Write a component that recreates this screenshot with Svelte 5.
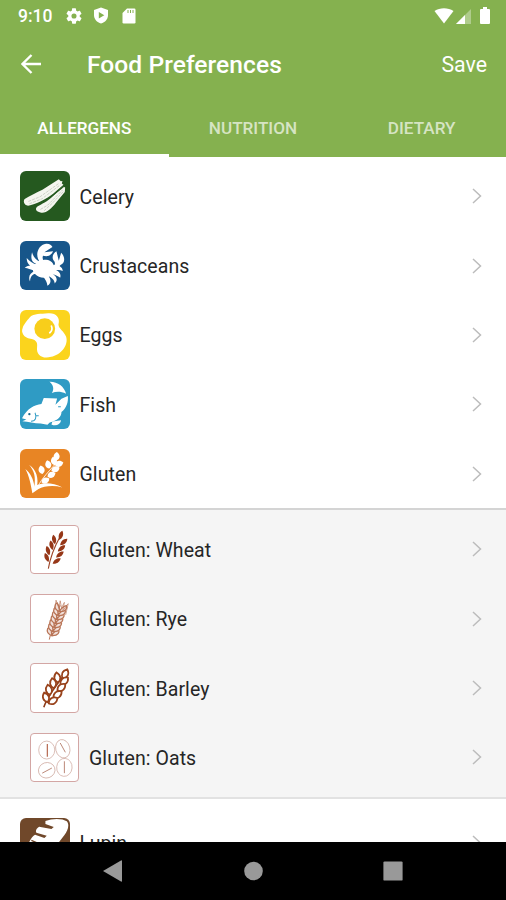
<script>
  const tabs = ['Allergens', 'Nutrition', 'Dietary']

  const allergens = [
    { id: 'celery', name: 'Celery', color: '#25591f' },
    { id: 'crustaceans', name: 'Crustaceans', color: '#17568a' },
    { id: 'eggs', name: 'Eggs', color: '#fbd41d' },
    { id: 'fish', name: 'Fish', color: '#2f9bc4' },
    { id: 'gluten', name: 'Gluten', color: '#e88524' }
  ]

  const glutenTypes = [
    { id: 'wheat', name: 'Gluten: Wheat' },
    { id: 'rye', name: 'Gluten: Rye' },
    { id: 'barley', name: 'Gluten: Barley' },
    { id: 'oats', name: 'Gluten: Oats' }
  ]

  const more = [{ id: 'lupin', name: 'Lupin', color: '#70482a' }]

  // x, y, rotation of each grain on the ear
  const glutenGrains = [
    [109, 22, 5], [101, 36, -12], [84, 46, -12], [64, 62, -10],
    [117, 44, 75], [106, 60, 72], [94, 77, 68], [76, 94, 65]
  ]
  const wheatGrains = [
    [93, 29, 18], [72, 42, -10], [64, 60, -12], [53, 77, -16], [49, 98, -22],
    [102, 50, 48], [95, 70, 50], [90, 89, 52], [80, 109, 56]
  ]
  const ryeGrains = [0, 1, 2, 3, 4, 5, 6]
  const barleyGrains = [
    [106, 32, 24], [82, 43, -8], [69, 61, -10], [56, 81, -14], [47, 105, -20],
    [103, 54, 46], [94, 74, 48], [82, 96, 52], [68, 115, 58]
  ]

  let activeTab = $state('Allergens')
</script>

{#snippet picture(id)}
  <svg viewBox="0 0 148 148">
    {#if id === 'celery'}
      <g fill="#f5f6ef">
        <path d="M14 84C28 75 48 65 67 56L116 25L122 31L127 30L125 37L130 41L99 68C78 84 48 100 24 104C11 102 9 90 14 84Z" />
        <path d="M51 107C65 98 83 91 97 76L129 46L135 49L134 63L108 94C93 114 77 128 61 124C49 122 44 114 51 107Z" />
      </g>
      <path d="M25 91L60 77L115 38M28 98L66 83L121 41M61 115L83 102L127 57M72 119L97 96L130 61" fill="none" stroke="#b9c0b3" stroke-width="2" stroke-dasharray="9 3" />
      <path d="M45 104L91 79L135 43" fill="none" stroke="#25591f" stroke-width="3" />
    {:else if id === 'crustaceans'}
      <path d="M43 73C50 59 65 53 84 57C103 62 108 85 96 100C82 115 56 112 45 99C37 91 37 83 43 73Z" fill="#fff" />
      <path d="M61 65C43 45 52 12 78 8C88 7 94 12 97 18L73 34L99 31C91 48 78 46 69 44C66 50 68 56 72 62ZM90 71C103 76 107 70 103 61C95 53 95 40 109 31L116 59L123 35C135 47 136 66 121 72C113 84 102 86 94 82Z" fill="#fff" />
      <path d="M51 68C35 65 31 53 36 34C40 48 47 56 59 62ZM45 79C28 77 20 66 20 51C29 61 37 67 50 71ZM43 89C31 84 24 82 14 80C27 71 38 72 48 80ZM47 98C36 100 31 107 30 121C23 106 31 95 44 90ZM70 107C76 117 81 122 82 134C96 126 92 112 83 102ZM86 104C95 112 102 114 104 127C117 114 105 102 93 96ZM93 95C105 104 113 103 120 110C125 96 112 86 98 83ZM98 84C110 89 119 85 128 90C126 73 112 72 98 74Z" fill="#fff" />
    {:else if id === 'eggs'}
      <path d="M30 21C42 11 61 12 84 10C107 8 121 23 115 43C115 56 132 63 138 80C146 106 121 135 93 140C66 147 48 134 51 111C54 93 43 88 31 86C12 84 2 67 8 54C10 45 21 32 30 21Z" fill="#fff" />
      <circle cx="74" cy="56" r="31" fill="#f8ce1b" />
      <path d="M94 48C97 55 95 63 89 68" fill="none" stroke="#fff" stroke-width="5" stroke-linecap="round" />
    {:else if id === 'fish'}
      <path d="M6 117C22 88 43 78 64 75L71 57L111 58L106 77L124 59L143 51C145 69 139 87 124 99C124 113 111 126 89 130L82 137L62 133C42 132 25 128 7 126L19 121Z" fill="#fff" />
      <path d="M88 8C112 7 132 22 138 44C121 37 109 37 95 42C104 28 98 16 88 8ZM97 127L123 123C120 137 107 142 94 136Z" fill="#fff" />
      <path d="M33 126C48 126 50 114 45 101M48 110H56M114 83L122 83" stroke="#2f9bc4" stroke-width="3" fill="none" />
      <circle cx="28" cy="105" r="3.5" fill="#17678f" />
    {:else if id === 'gluten'}
      <g fill="#fff">
        {#each glutenGrains as [x, y, r]}
          <path d="M0-13C12-6 13 6 1 13C-11 8-12-5 0-13Z" transform="translate({x} {y}) rotate({r})" />
        {/each}
        <path d="M43 113C60 100 94 98 127 115C101 108 73 110 54 120L37 132C32 106 28 81 16 60C32 73 40 91 43 111ZM43 112C47 83 43 66 27 47C49 62 57 86 50 119Z" />
      </g>
      <path d="M50 121C59 96 74 80 112 38" fill="none" stroke="#fff" stroke-width="2.5" />
    {:else if id === 'wheat'}
      <path d="M54 133C60 98 70 70 90 34" fill="none" stroke="#9d4527" stroke-width="3.5" />
      <g fill="#963718">
        {#each wheatGrains as [x, y, r]}
          <path d="M0-15C9-6 8 6 0 15C-8 6-9-6 0-15Z" transform="translate({x} {y}) rotate({r})" />
        {/each}
      </g>
    {:else if id === 'rye'}
      <g fill="none" stroke="#b97557">
        <path d="M57 139L61 122L91 32" stroke-width="3" />
        <g stroke-width="4">
          {#each ryeGrains as i}
            <g transform="translate({67 + i * 4} {119 - i * 12.5}) rotate(17)">
              <path d="M0 8C-22 5-21-9-15-16C-8-11-3-4 0 8ZM0 8C21 3 20-10 15-16C7-11 2-4 0 8Z" fill="#f1dfd9" />
            </g>
          {/each}
        </g>
        <path d="M74 46L78 16L87 42L91 18L95 40L104 23L99 49L116 27L108 62" stroke-width="2" />
      </g>
    {:else if id === 'barley'}
      <path d="M40 135C48 107 72 74 100 38" fill="none" stroke="#8d3b19" stroke-width="5" />
      <g fill="#fff" stroke="#99431c" stroke-width="5.5">
        {#each barleyGrains as [x, y, r]}
          <path d="M0-17C13-7 12 7 0 15C-12 7-13-7 0-17Z" transform="translate({x} {y}) rotate({r})" />
        {/each}
      </g>
    {:else if id === 'oats'}
      <g fill="none" stroke="#cda69c" stroke-width="2.2">
        <ellipse cx="49" cy="50" rx="25" ry="28" />
        <ellipse cx="99" cy="46" rx="22" ry="29" transform="rotate(-14 99 46)" />
        <ellipse cx="49" cy="113" rx="26" ry="24" transform="rotate(-18 49 113)" />
        <ellipse cx="104" cy="104" rx="24" ry="28" transform="rotate(5 104 104)" />
      </g>
      <g fill="none" stroke="#b98474" stroke-width="3">
        <path d="M51 31V71" stroke="#ba7159" stroke-width="4" />
        <path d="M91 28L107 57M35 122L65 106M104 85V122" />
      </g>
    {:else if id === 'lupin'}
      <path d="M76 9C98 0 128 1 140 10C149 20 143 38 133 51L84 114C65 137 36 148 22 125C13 108 20 83 27 73Q36 54 45 50L73 60L80 53L49 44C45 38 50 30 57 26L94 33L101 27L76 18Z" fill="#fff" />
      <path d="M34 67L55 76" stroke="#70482a" stroke-width="4" />
    {/if}
  </svg>
{/snippet}

{#snippet row(item)}
  <button class="row">
    <span class="tile" class:outlined={!item.color} style:background={item.color}>
      {@render picture(item.id)}
    </span>
    <span class="name">{item.name}</span>
    <svg class="chevron" viewBox="0 0 10 16">
      <path d="M1 1L8.5 8L1 15" />
    </svg>
  </button>
{/snippet}

<div class="screen">
  <header>
    <div class="status">
      <span class="time">9:10</span>
      <svg width="16" height="16" viewBox="2 2 20 20" fill="#fff">
        <path d="M19.14 12.94c.04-.3.06-.61.06-.94s-.02-.64-.07-.94l2.03-1.58a.49.49 0 0 0 .12-.61l-1.92-3.32a.49.49 0 0 0-.59-.22l-2.39.96a7 7 0 0 0-1.62-.94l-.36-2.54a.48.48 0 0 0-.48-.41h-3.84c-.24 0-.43.17-.47.41l-.36 2.54c-.59.24-1.13.57-1.62.94l-2.39-.96a.48.48 0 0 0-.59.22L2.74 8.87a.48.48 0 0 0 .12.61l2.03 1.58a6 6 0 0 0 0 1.88l-2.03 1.58a.49.49 0 0 0-.12.61l1.92 3.32c.12.22.37.29.59.22l2.39-.96c.5.38 1.03.7 1.62.94l.36 2.54c.05.24.24.41.48.41h3.84c.24 0 .44-.17.47-.41l.36-2.54a7 7 0 0 0 1.62-.94l2.39.96c.22.08.47 0 .59-.22l1.92-3.32a.48.48 0 0 0-.12-.61zM12 15.2a3.2 3.2 0 1 1 0-6.4 3.2 3.2 0 0 1 0 6.4z" />
      </svg>
      <svg class="shield" width="16" height="17" viewBox="0 0 16 17">
        <path d="M8 .5L15 3V8C15 12 12 15.5 8 16.5C4 15.5 1 12 1 8V3Z" fill="#fff" />
        <path d="M5.8 5L11.3 8.3L5.8 11.6Z" fill="#85b14f" />
      </svg>
      <svg class="card" width="14" height="16" viewBox="0 0 14 16">
        <path d="M5 .5H12.3Q13.5.5 13.5 1.7V14.3Q13.5 15.5 12.3 15.5H1.7Q.5 15.5.5 14.3V5Z" fill="#fff" />
        <path d="M6 2V5M8.5 2V5M11 2V5" stroke="#85b14f" stroke-width="1" />
      </svg>
      <span class="spacer"></span>
      <svg width="20" height="16" viewBox="0 0 20 16">
        <path d="M.5 3C6-.7 14-.7 19.5 3L10 15.5Z" fill="#fff" />
      </svg>
      <svg class="signal" width="15" height="15" viewBox="0 0 15 15">
        <path d="M0 15L15 0V15Z" fill="#fff" opacity="0.35" />
        <path d="M0 15L9 6V15Z" fill="#fff" />
      </svg>
      <svg class="battery" width="10" height="17" viewBox="0 0 10 17">
        <path d="M3 0H7V2H9Q10 2 10 3V16Q10 17 9 17H1Q0 17 0 16V3Q0 2 1 2H3Z" fill="#fff" />
      </svg>
    </div>

    <div class="toolbar">
      <button class="back" aria-label="Back">
        <svg width="20" height="20" viewBox="0 0 20 20">
          <path d="M10.5 1L1.5 10L10.5 19M2 10H20" fill="none" stroke="#fff" stroke-width="2.3" />
        </svg>
      </button>
      <h1>Food Preferences</h1>
      <button class="save">Save</button>
    </div>

    <nav>
      {#each tabs as tab}
        <button class="tab" class:active={activeTab === tab} onclick={() => (activeTab = tab)}>
          {tab}
        </button>
      {/each}
    </nav>
  </header>

  <main>
    <section>
      {#each allergens as item}
        {@render row(item)}
      {/each}
    </section>
    <section class="sub">
      {#each glutenTypes as item}
        {@render row(item)}
      {/each}
    </section>
    <section class="more">
      {#each more as item}
        {@render row(item)}
      {/each}
    </section>
  </main>

  <footer>
    <svg width="20" height="22" viewBox="0 0 20 22">
      <path d="M0 11L18 .5Q19 0 19 1V21Q19 22 18 21.5Z" />
    </svg>
    <svg width="20" height="20" viewBox="0 0 20 20">
      <circle cx="10.5" cy="10" r="9.3" />
    </svg>
    <svg width="20" height="20" viewBox="0 0 20 20">
      <rect x=".4" y=".4" width="19.2" height="19.2" rx="1.2" />
    </svg>
  </footer>
</div>

<style>
  :global(body) {
    margin: 0;
  }

  .screen {
    display: flex;
    flex-direction: column;
    width: 506px;
    height: 900px;
    overflow: hidden;
    font-family: Roboto, 'Liberation Sans', sans-serif;
    background: #fff;
  }

  button {
    margin: 0;
    padding: 0;
    border: none;
    background: none;
    font-family: inherit;
    cursor: pointer;
  }

  svg {
    display: block;
    flex-shrink: 0;
  }

  header {
    flex-shrink: 0;
    height: 156.5px;
    color: #fff;
    background: #85b14f;
  }

  .status {
    display: flex;
    align-items: center;
    box-sizing: border-box;
    height: 31px;
    padding: 0 16px 0 18px;
  }

  .time {
    width: 48px;
    font-size: 17.5px;
    font-weight: 500;
  }

  .shield {
    margin-left: 11px;
  }

  .card {
    margin-left: 13px;
  }

  .spacer {
    flex: 1;
  }

  .signal {
    margin: 1px 9px 0 2px;
  }

  .toolbar {
    display: flex;
    align-items: center;
    height: 66px;
    padding: 0 19px 0 21px;
  }

  .back {
    width: 66px;
  }

  h1 {
    flex: 1;
    margin: 0;
    font-size: 24.6px;
    font-weight: 500;
    letter-spacing: 0.05px;
  }

  .save {
    color: #fff;
    font-size: 21.3px;
  }

  nav {
    display: grid;
    grid-template-columns: repeat(3, 1fr);
    height: 59.5px;
  }

  .tab {
    padding-top: 5px;
    border-bottom: 3px solid transparent;
    color: rgba(255, 255, 255, 0.68);
    font-size: 17.1px;
    font-weight: 500;
    text-transform: uppercase;
  }

  .tab.active {
    border-bottom-color: #fff;
    color: #fff;
  }

  main {
    flex: 1;
    min-height: 0;
    overflow: hidden;
  }

  section {
    padding-top: 5px;
  }

  .sub {
    padding: 4.5px 0 5px 10px;
    border-top: 2px solid #d4d4d4;
    border-bottom: 2px solid #e2e2e2;
    background: #f5f5f5;
  }

  .more {
    padding-top: 9px;
  }

  .row {
    display: flex;
    align-items: center;
    box-sizing: border-box;
    width: 100%;
    height: 69.35px;
    padding: 0 24px 0 20px;
    text-align: left;
  }

  .sub .row {
    padding-left: 19.5px;
  }

  .tile {
    box-sizing: border-box;
    width: 49.5px;
    height: 49.5px;
    border-radius: 6px;
    overflow: hidden;
  }

  .tile svg {
    width: 100%;
    height: 100%;
  }

  .outlined {
    border: 1px solid #d3a6a4;
    border-radius: 4px;
    background: #fff;
  }

  .name {
    flex: 1;
    margin-left: 10px;
    padding-top: 2px;
    color: #262626;
    font-size: 19.5px;
    letter-spacing: 0.08px;
  }

  .chevron {
    width: 10px;
    height: 16px;
    fill: none;
    stroke: #bcbcbc;
    stroke-width: 1.5;
  }

  footer {
    display: flex;
    align-items: center;
    justify-content: space-between;
    flex-shrink: 0;
    box-sizing: border-box;
    height: 58px;
    padding: 0 103px;
    background: #000;
    fill: #999;
  }
</style>
